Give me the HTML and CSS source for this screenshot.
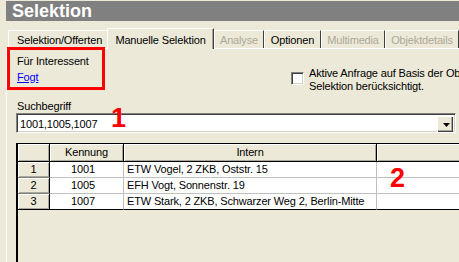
FILE: index.html
```html
<!DOCTYPE html>
<html lang="de">
<head>
    <meta charset="UTF-8">
    <title>Selektion</title>
    <link rel="stylesheet" href="styles.css">
</head>
<body>

<div class="titlebar">Selektion</div>

<div class="page">
    <div class="tabs">
        <div class="tab tab-first">Selektion/Offerten</div>
        <div class="tab tab-active">Manuelle Selektion</div>
        <div class="tab tab-off w-analyse">Analyse</div>
        <div class="tab w-optionen">Optionen</div>
        <div class="tab tab-off w-multimedia">Multimedia</div>
        <div class="tab tab-off w-objekt">Objektdetails</div>
    </div>

    <div class="panel">
        <div class="top">
            <div class="interessent">
                <div>Für Interessent</div>
                <a href="#" class="link">Fogt</a>
            </div>
            <label class="aktiv">
                <span class="check"></span>
                <span class="aktiv-text">Aktive Anfrage auf Basis der Objektdetails wird bei der<br>Selektion berücksichtigt.</span>
            </label>
        </div>

        <div class="label">Suchbegriff</div>
        <div class="combo">
            <span class="combo-text">1001,1005,1007</span>
            <span class="combo-btn">
                <svg width="7" height="4" viewBox="0 0 7 4"><path d="M0 0h7L3.5 4z" fill="#000"/></svg>
            </span>
        </div>

        <div class="grid">
            <div class="row head">
                <div class="hcell"></div>
                <div class="hcell">Kennung</div>
                <div class="hcell">Intern</div>
                <div class="hcell"></div>
            </div>
            <div class="row">
                <div class="rnum">1</div>
                <div class="cell num">1001</div>
                <div class="cell">ETW Vogel, 2 ZKB, Oststr. 15</div>
                <div class="cell"></div>
            </div>
            <div class="row">
                <div class="rnum">2</div>
                <div class="cell num">1005</div>
                <div class="cell">EFH Vogt, Sonnenstr. 19</div>
                <div class="cell"></div>
            </div>
            <div class="row last">
                <div class="rnum">3</div>
                <div class="cell num">1007</div>
                <div class="cell">ETW Stark, 2 ZKB, Schwarzer Weg 2, Berlin-Mitte</div>
                <div class="cell"></div>
            </div>
        </div>
    </div>
</div>

<!-- annotations -->
<div class="mark-box"></div>
<div class="mark-num mark-one">1</div>
<div class="mark-num mark-two">2</div>

</body>
</html>
```

FILE: styles.css
```css
body { margin: 0; background-color: #ece9d8; font-family: "Liberation Sans", Arial, sans-serif; font-size: 11px; letter-spacing: -0.15px; color: #000; overflow: hidden; height: 262px; position: relative; }

.titlebar { margin: 1px 0 0 6px; height: 20px; line-height: 20px; padding-left: 6px; background-color: #808080; color: #fff; font-size: 18px; font-weight: bold; letter-spacing: 0; }

.page { margin-left: 6px; width: 700px; }

.tabs { height: 27px; display: flex; align-items: flex-end; padding-left: 2px; }
.tab { box-sizing: border-box; height: 18px; padding-top: 1px; line-height: 16px; text-align: center; white-space: nowrap; border-top: 1px solid #fff; border-left: 1px solid #fff; border-right: 1px solid #404040; }
.tab-first { width: 99px; border-right: none; text-align: left; padding-left: 8px; }
.tab-active { width: 107px; height: 21px; padding-top: 3px; line-height: 17px; margin-bottom: -1px; position: relative; z-index: 1; background-color: #ece9d8; box-shadow: inset -1px 0 #aca899; }
.tab-off { color: #aca899; }
.w-analyse { width: 50px; }
.w-optionen { width: 57px; }
.w-multimedia { width: 64px; }
.w-objekt { width: 74px; }

.panel { border-top: 1px solid #fff; border-left: 1px solid #fff; padding: 4px 0 0 10px; height: 300px; }

.top { display: flex; height: 41px; }
.interessent { width: 274px; line-height: 16px; }
.link { color: #00f; text-decoration: underline; }
.aktiv { display: flex; align-items: flex-start; white-space: nowrap; }
.check { width: 13px; height: 13px; box-sizing: border-box; margin: 19px 5px 0 0; background-color: #fff; border-top: 1px solid #808080; border-left: 1px solid #808080; border-bottom: 1px solid #fff; border-right: 1px solid #fff; box-shadow: inset 1px 1px #404040, inset -1px -1px #d4d0c8; }
.aktiv-text { margin-top: 14px; line-height: 13px; }

.label { margin-top: 6px; line-height: 13px; }

.combo { box-sizing: border-box; margin-left: -1px; width: 440px; height: 20px; padding: 2px; display: flex; background-color: #fff; border-top: 1px solid #808080; border-left: 1px solid #808080; border-bottom: 1px solid #fff; border-right: 1px solid #fff; box-shadow: inset 1px 1px #404040, inset -1px -1px #d4d0c8; }
.combo-text { flex: 1; padding-left: 1px; line-height: 16px; }
.combo-btn { width: 16px; height: 16px; box-sizing: border-box; padding: 7px 0 0 6px; background-color: #ece9d8; box-shadow: inset 1px 1px #fff, inset -1px -1px #404040, inset -2px -2px #aca899; }
.combo-btn svg { display: block; }

.grid { margin: 10px 0 0 -1px; width: 600px; height: 200px; border-top: 1px solid #000; border-left: 2px solid #000; }
.row { display: grid; grid-template-columns: 32px 74px 253px 1fr; }
.hcell { box-sizing: border-box; height: 18px; line-height: 17px; text-align: center; border-right: 1px solid #000; border-bottom: 1px solid #000; background-color: #ece9d8; box-shadow: inset 1px 1px #fff, inset -1px -1px #aca899; }
.rnum { box-sizing: border-box; height: 16px; line-height: 15px; text-align: center; border-right: 1px solid #000; border-bottom: 1px solid #808080; background-color: #ece9d8; box-shadow: inset 1px 1px #fff, inset -1px -1px #aca899; }
.cell { box-sizing: border-box; height: 16px; line-height: 15px; padding-left: 3px; white-space: nowrap; overflow: hidden; background-color: #fff; border-right: 1px solid #c0c0c0; border-bottom: 1px solid #c0c0c0; }
.cell.num { padding-left: 21px; }
.last .cell, .last .rnum { border-bottom-color: #000; }

.mark-box { position: absolute; left: 7px; top: 47px; width: 98px; height: 43px; box-sizing: border-box; border: 3px solid #f00; }
.mark-num { position: absolute; font-size: 27px; line-height: 27px; font-weight: bold; color: #f00; letter-spacing: 0; }
.mark-one { left: 111px; top: 105px; }
.mark-two { left: 390px; top: 165px; }
```
